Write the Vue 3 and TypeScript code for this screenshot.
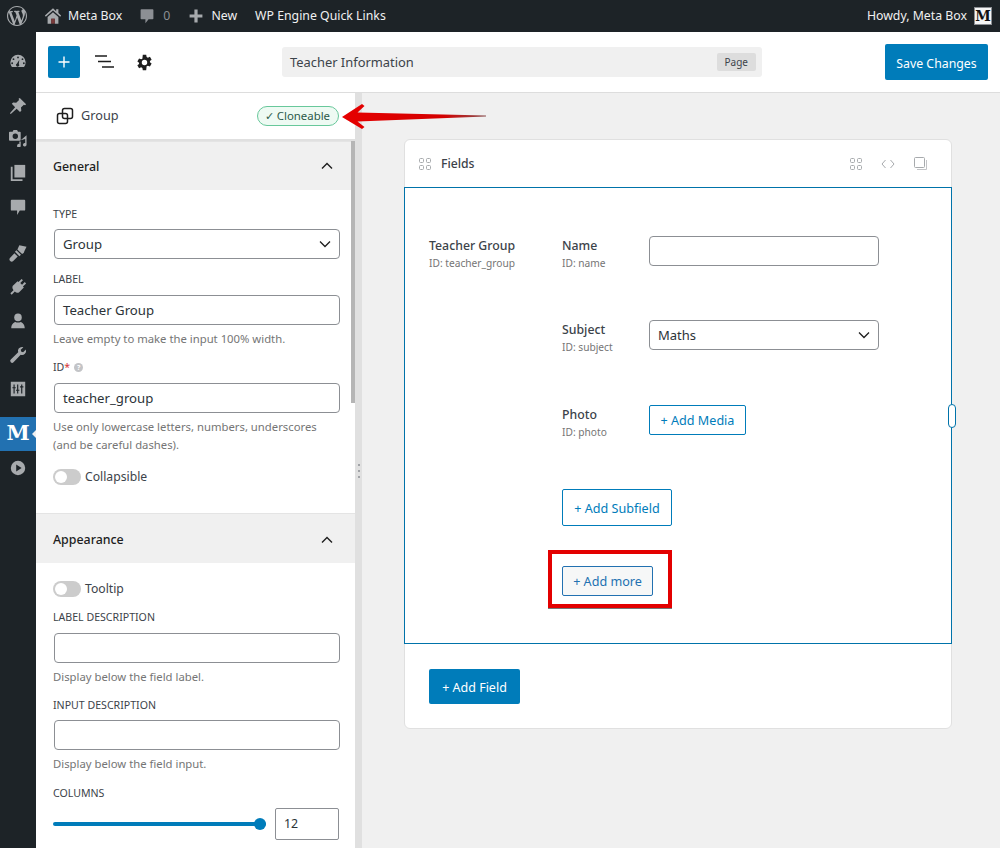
<script setup lang="ts">
const subfields = [
  { name: 'Name', id: 'ID: name', kind: 'k-text' },
  { name: 'Subject', id: 'ID: subject', kind: 'k-select' },
  { name: 'Photo', id: 'ID: photo', kind: 'k-media' },
]
</script>

<template>
  <div class="page">
    <header class="adminbar">
      <svg class="wp" viewBox="0 0 20 20" width="20" height="20"><path fill="#a7aaad" d="M20 10c0-5.510-4.490-10-10-10C4.480 0 0 4.490 0 10c0 5.520 4.480 10 10 10 5.510 0 10-4.480 10-10zM7.780 15.370L4.370 6.220c.55-.02 1.170-.08 1.170-.08.5-.06.44-1.130-.06-1.110 0 0-1.450.11-2.370.11-.18 0-.37 0-.58-.01C4.120 2.690 6.890 1.120 10 1.120c2.330 0 4.450.87 6.050 2.340-.68-.11-1.650.39-1.650 1.580 0 .74.45 1.360.9 2.100.35.61.55 1.360.55 2.460 0 1.490-1.400 5-1.400 5l-3.030-8.370c.54-.02.82-.17.82-.17.5-.05.44-1.250-.06-1.220 0 0-1.440.12-2.380.12-.87 0-2.330-.12-2.330-.12-.5-.03-.56 1.200-.06 1.220l.92.08 1.260 3.410zM17.410 10c.24-.64.74-1.870.43-4.250.7 1.290 1.050 2.710 1.050 4.250 0 3.290-1.730 6.240-4.400 7.780.97-2.590 1.940-5.200 2.920-7.780zM6.100 18.090C3.120 16.650 1.110 13.530 1.110 10c0-1.300.23-2.480.72-3.590C3.250 10.300 4.670 14.200 6.100 18.090zm4.030-6.630l2.580 6.980c-.86.29-1.740.45-2.710.45-.81 0-1.600-.12-2.340-.34.81-2.380 1.640-4.730 2.470-7.090z"/></svg>
      <svg class="home" viewBox="0 0 20 20" width="18" height="18"><path fill="#a7aaad" d="M10 1.500 1 9.500l1 1.200L10 3.800l8 6.900 1-1.200-3-2.700V2.500h-2.500v2.300z"/><path fill="#a7aaad" d="M4 11 10 5.800 16 11v7.500h-4V13H8v5.500H4z"/><rect x="8" y="13" width="4" height="5.500" fill="#7a3b3b"/></svg>
      <span class="bar-t site">Meta Box</span>
      <svg class="cmt" viewBox="0 0 20 20" width="16" height="16"><path fill="#8c8f94" d="M3 1.500h14a1 1 0 0 1 1 1v10.500a1 1 0 0 1-1 1h-5l-4 5v-5H3a1 1 0 0 1-1-1V2.500a1 1 0 0 1 1-1z"/></svg>
      <span class="bar-t zero">0</span>
      <svg class="plus" viewBox="0 0 20 20" width="16" height="16"><path fill="#a7aaad" d="M8 2h4v6h6v4h-6v6H8v-6H2V8h6z"/></svg>
      <span class="bar-t new">New</span>
      <span class="bar-t quick">WP Engine Quick Links</span>
      <span class="bar-t howdy">Howdy, Meta Box</span>
      <span class="avatar">M</span>
    </header>

    <div class="shell">
      <nav class="menu">
        <svg class="mi first" viewBox="0 0 20 20"><path d="M10 3a8.500 8.500 0 0 0-8.500 8.500c0 2 .7 3.800 1.800 5.200h13.400a8.500 8.500 0 0 0 1.800-5.200A8.500 8.500 0 0 0 10 3zm0 2a1 1 0 1 1 0 2 1 1 0 0 1 0-2zM5 7a1 1 0 1 1 0 2 1 1 0 0 1 0-2zm-1.500 4.500a1 1 0 1 1 0 2 1 1 0 0 1 0-2zm13 0a1 1 0 1 1 0 2 1 1 0 0 1 0-2zM15 7a1 1 0 1 1 0 2 1 1 0 0 1 0-2zm-3.500 1.500-.6 4.700a1.800 1.800 0 1 1-2-.4z" fill-rule="evenodd"/></svg>
        <svg class="mi g2" viewBox="0 0 20 20"><path d="M12 1l7 7-1.200 1.200-1.300-.6-3.200 3.200.4 3.400-1.500 1.500-3.700-3.700L2 19l-1-1 5.800-6.700L3.100 7.600l1.500-1.500 3.400.4 3.200-3.200-.6-1.300z"/></svg>
        <svg class="mi g3" viewBox="0 0 20 20"><path d="M1 3h3l1-2h4l1 2h2a1 1 0 0 1 1 1v8a1 1 0 0 1-1 1H1a1 1 0 0 1-1-1V4a1 1 0 0 1 1-1zm6 2a3 3 0 1 0 0 6 3 3 0 0 0 0-6z" fill-rule="evenodd"/><path d="M19.500 7v10.500a2 2 0 1 1-1.500-1.900V11l-5 1.500v6a2 2 0 1 1-1.500-1.900V14h1.500v-1.500z"/></svg>
        <svg class="mi g4" viewBox="0 0 20 20"><path d="M6 1h12v14H6z"/><path d="M4 3v14h11v2H2V3z"/></svg>
        <svg class="mi g5" viewBox="0 0 20 20"><path d="M3 2h14a1 1 0 0 1 1 1v10a1 1 0 0 1-1 1h-5l-3 5v-5H3a1 1 0 0 1-1-1V3a1 1 0 0 1 1-1z"/></svg>
        <svg class="mi g6" viewBox="0 0 20 20"><path d="M11.500 1.500 19.500 3l-2.200 4.500-1 2.500-1.800 1.200L9.300 6z"/><path d="M8.300 7 13.300 12 11.600 13.700 6.600 8.700z"/><path d="M6 10.300l3.700 3.700-5 4.800a2 2 0 0 1-3.400-3.400z"/></svg>
        <svg class="mi g7" viewBox="0 0 20 20"><path d="M14 1l1.500 1.500-3 3L14.500 7.500l3-3L19 6l-3.500 3.500 1 1-5.500 5.500A4 4 0 0 1 6.500 15L3 18.500 1.500 17 5 13.500A4 4 0 0 1 4 9l5.500-5.500 1 1z"/></svg>
        <svg class="mi g8" viewBox="0 0 20 20"><circle cx="10" cy="6" r="4.200"/><path d="M2.500 18c0-4 2.500-6.500 4.500-7 1.800 1 4.200 1 6 0 2 .5 4.500 3 4.500 7z"/></svg>
        <svg class="mi g9" viewBox="0 0 20 20"><path d="M14.500 1a4.500 4.500 0 0 1 1.500.3l-3 3 .7 2 2 .7 3-3A4.500 4.500 0 0 1 13 9.800L5 18a2 2 0 0 1-3-3l8.200-8A4.500 4.500 0 0 1 14.500 1z"/></svg>
        <svg class="mi g10" viewBox="0 0 20 20"><path fill-rule="evenodd" d="M2 2h16v16H2zM5 5v3H3.800v1.200H5V15h1.300V9.200h1.200V8H6.300V5zm4 0v5.800H7.800V12H9v3h1.300v-3h1.200v-1.200h-1.200V5zm4.500 0v2h-1.200v1.200h1.200V15h1.300V8.200H16V7h-1.200V5z"/></svg>
        <div class="mi-active">
          <span class="m-letter">M</span>
          <span class="notch"></span>
        </div>
        <svg class="mi g12" viewBox="0 0 20 20"><path fill-rule="evenodd" d="M10 2a8 8 0 1 1 0 16 8 8 0 0 1 0-16zM8 6v8l6-4z"/></svg>
      </nav>

      <div class="workspace">
        <div class="toolbar">
          <button class="add-btn">
            <svg viewBox="0 0 16 16" width="16" height="16"><path d="M8 2.500v11M2.500 8h11" stroke="#fff" stroke-width="1.400"/></svg>
          </button>
          <svg class="list-ic" viewBox="0 0 20 14" width="20" height="14"><path d="M0 1h12M3 6.500h13M7 12h12" stroke="#1e1e1e" stroke-width="1.500"/></svg>
          <svg class="gear" viewBox="0 0 20 20" width="17" height="17"><path fill="#1e1e1e" fill-rule="evenodd" d="M8 1h4l.5 2.500 1.500.8 2.400-1 2 3.400-2 1.600v1.400l2 1.600-2 3.400-2.400-1-1.500.8L12 19H8l-.5-2.500-1.500-.8-2.400 1-2-3.400 2-1.600V10.300l-2-1.600 2-3.400 2.400 1 1.500-.8zM10 6.800a3.200 3.200 0 1 0 0 6.400 3.200 3.200 0 0 0 0-6.400z"/></svg>
          <div class="title-box">
            <span>Teacher Information</span>
            <span class="page-tag">Page</span>
          </div>
          <button class="save">Save Changes</button>
        </div>

        <div class="body">
          <aside class="panel">
            <div class="group-head">
              <svg viewBox="0 0 18 18" width="18" height="18"><rect x="1.500" y="6.500" width="10" height="10" rx="2" fill="none" stroke="#1e1e1e" stroke-width="1.500"/><rect x="6.500" y="1.500" width="10" height="10" rx="2" fill="none" stroke="#1e1e1e" stroke-width="1.500"/></svg>
              <span class="group-t">Group</span>
              <span class="badge">✓ Cloneable</span>
            </div>
            <div class="scroll">
              <section class="sec-head"><span>General</span><svg viewBox="0 0 12 8" width="12" height="8"><path d="M1 6.500 6 1.500l5 5" fill="none" stroke="#1e1e1e" stroke-width="1.400"/></svg></section>
              <div class="sec-body general">
                <label class="lab">TYPE</label>
                <div class="inp sel">Group<svg viewBox="0 0 12 8" width="12" height="8"><path d="M1 1.500 6 6.500l5-5" fill="none" stroke="#1e1e1e" stroke-width="1.300"/></svg></div>
                <label class="lab mt">LABEL</label>
                <div class="inp">Teacher Group</div>
                <p class="hint">Leave empty to make the input 100% width.</p>
                <label class="lab idl">ID<em>*</em><i class="q">?</i></label>
                <div class="inp">teacher_group</div>
                <p class="hint">Use only lowercase letters, numbers, underscores<br>(and be careful dashes).</p>
                <div class="tog-row"><span class="tog"></span>Collapsible</div>
              </div>
              <section class="sec-head sec-b"><span>Appearance</span><svg viewBox="0 0 12 8" width="12" height="8"><path d="M1 6.500 6 1.500l5 5" fill="none" stroke="#1e1e1e" stroke-width="1.400"/></svg></section>
              <div class="sec-body appearance">
                <div class="tog-row"><span class="tog"></span>Tooltip</div>
                <label class="lab ld">LABEL DESCRIPTION</label>
                <div class="inp"></div>
                <p class="hint">Display below the field label.</p>
                <label class="lab id2">INPUT DESCRIPTION</label>
                <div class="inp"></div>
                <p class="hint">Display below the field input.</p>
                <label class="lab col">COLUMNS</label>
                <div class="slider-row">
                  <div class="track"><span class="thumb"></span></div>
                  <div class="num">12</div>
                </div>
              </div>
            </div>
            <span class="scrollbar"></span>
          </aside>

          <div class="gutter"><span class="dots"></span></div>

          <main class="canvas">
            <div class="card">
              <div class="card-head">
                <svg class="grid4" viewBox="0 0 12 12" width="12" height="12"><g fill="none" stroke="#a7aaad" stroke-width="1"><rect x=".5" y=".5" width="4" height="4" rx="1"/><rect x="7.500" y=".5" width="4" height="4" rx="1"/><rect x=".5" y="7.500" width="4" height="4" rx="1"/><rect x="7.500" y="7.500" width="4" height="4" rx="1"/></g></svg>
                <span class="fields-t">Fields</span>
                <svg class="grid4 r1" viewBox="0 0 12 12" width="12" height="12"><g fill="none" stroke="#a7aaad" stroke-width="1"><rect x=".5" y=".5" width="4" height="4" rx="1"/><rect x="7.500" y=".5" width="4" height="4" rx="1"/><rect x=".5" y="7.500" width="4" height="4" rx="1"/><rect x="7.500" y="7.500" width="4" height="4" rx="1"/></g></svg>
                <svg class="r2" viewBox="0 0 14 10" width="14" height="10"><path d="M4.500 1 1 5l3.500 4M9.500 1 13 5l-3.500 4" fill="none" stroke="#a7aaad" stroke-width="1"/></svg>
                <svg class="r3" viewBox="0 0 13 13" width="13" height="13"><rect x=".5" y=".5" width="10" height="10" rx="1" fill="none" stroke="#a7aaad"/><path d="M12.500 3v9.500H3" fill="none" stroke="#c3c4c7"/></svg>
              </div>
              <div class="group-box">
                <div class="gcol">
                  <div class="fname">Teacher Group</div>
                  <div class="fid">ID: teacher_group</div>
                </div>
                <div class="subs">
                  <div v-for="f in subfields" :key="f.name" class="sub" :class="f.kind">
                    <div class="sub-l">
                      <div class="fname">{{ f.name }}</div>
                      <div class="fid">{{ f.id }}</div>
                    </div>
                    <div v-if="f.kind === 'k-text'" class="ctl"></div>
                    <div v-else-if="f.kind === 'k-select'" class="ctl csel">Maths<svg viewBox="0 0 12 8" width="12" height="8"><path d="M1 1.500 6 6.500l5-5" fill="none" stroke="#1e1e1e" stroke-width="1.300"/></svg></div>
                    <button v-else class="outline media">+ Add Media</button>
                  </div>
                  <button class="outline subfield">+ Add Subfield</button>
                  <button class="outline more">+ Add more</button>
                </div>
                <span class="handle"></span>
              </div>
              <div class="card-foot"><button class="addfield">+ Add Field</button></div>
            </div>
          </main>
        </div>
      </div>
    </div>

    <svg class="arrow" viewBox="0 0 150 32" width="150" height="32"><defs><linearGradient id="ag" x1="0" x2="1"><stop offset="0" stop-color="#e60000"/><stop offset=".7" stop-color="#d40000"/><stop offset="1" stop-color="#8a5050"/></linearGradient></defs><path fill="url(#ag)" d="M2 17 22 4l2.500 2-7 6.500L146 15.500v1L17.500 21.500l7 5.500L22 29z"/></svg>
    <span class="redbox"></span>
  </div>
</template>

<style>
html, body { margin: 0; background: #f0f0f0; }
</style>

<style scoped>
.page { position: relative; width: 1000px; height: 848px; overflow: hidden; font-family: "Noto Sans", sans-serif; font-size: 12.4px; color: #3c434a; background: #f0f0f0; }
.adminbar { height: 32px; background: #1d2327; display: flex; align-items: center; color: #f0f0f1; }
.wp { margin-left: 7px; flex: none; }
.bar-t { font-size: 12.300px; line-height: 32px; white-space: nowrap; }
.home { margin-left: 17px; flex: none; }
.site { margin-left: 6px; }
.cmt { margin-left: 17px; flex: none; }
.zero { margin-left: 8px; color: #8c8f94; }
.plus { margin-left: 18px; flex: none; }
.new { margin-left: 7px; }
.quick { margin-left: 18px; }
.howdy { margin-left: auto; }
.avatar { width: 16px; height: 16px; margin: 0 8px 0 7px; border: 1px solid #8c8f94; background: #f5f5f5; color: #111; font: 700 14px/16px "DejaVu Serif", serif; text-align: center; overflow: hidden; }

.shell { display: flex; height: 816px; }
.menu { width: 36px; flex: none; background: #1d2327; display: flex; flex-direction: column; align-items: center; }
.mi { width: 18px; height: 18px; fill: #a7aaad; flex: none; }
.first { margin-top: 20px; }
.g2 { margin-top: 27px; }
.g3 { margin-top: 14px; }
.g4 { margin-top: 17px; }
.g5 { margin-top: 16px; }
.g6 { margin-top: 28px; }
.g7 { margin-top: 16px; }
.g8 { margin-top: 16px; }
.g9 { margin-top: 16px; }
.g10 { margin-top: 16px; }
.g12 { margin-top: 8px; }
.mi-active { position: relative; width: 36px; height: 34px; margin-top: 19px; background: #2271b1; text-align: center; flex: none; }
.m-letter { color: #fff; font: 700 21px/32px "DejaVu Serif", "Liberation Serif", serif; }
.notch { position: absolute; right: 0; top: 13px; border: 4px solid transparent; border-right-color: #f0f0f0; border-left-width: 0; }

.workspace { flex: 1; min-width: 0; display: flex; flex-direction: column; }
.toolbar { height: 60px; flex: none; background: #fff; border-bottom: 1px solid #ddd; display: flex; align-items: center; }
.add-btn { width: 32px; height: 32px; margin-left: 12px; padding: 0; border: 0; border-radius: 2px; background: #007cba; display: flex; align-items: center; justify-content: center; }
.list-ic { margin-left: 15px; }
.gear { margin-left: 21px; }
.title-box { margin-left: 129px; width: 480px; height: 30px; padding: 0 6px 0 8px; box-sizing: border-box; border-radius: 3px; background: #f0f0f0; display: flex; align-items: center; justify-content: space-between; font-size: 12.900px; color: #3c434a; }
.page-tag { height: 18px; padding: 0 8px; font-size: 10px; line-height: 18px; border-radius: 2px; background: #ddd; }
.save { margin-left: 123px; width: 103px; height: 36px; padding: 2px 0 0; border: 0; border-radius: 2px; background: #007cba; color: #fff; font: 12.300px "Noto Sans", sans-serif; }

.body { flex: 1; min-height: 0; display: flex; }
.panel { position: relative; width: 319px; flex: none; background: #fff; display: flex; flex-direction: column; overflow: hidden; }
.group-head { height: 46px; flex: none; padding: 0 16px 0 20px; display: flex; align-items: center; border-bottom: 2px solid #e0e0e0; box-sizing: content-box; }
.group-t { margin-left: 7px; font-size: 12.700px; position: relative; top: -1px; }
.badge { margin-left: auto; height: 18px; padding: 0 8px 0 7px; border: 1px solid #68c89b; border-radius: 10px; background: #eefaf3; font-size: 11.400px; line-height: 18px; color: #2c5a4a; }
.scroll { flex: 1; min-height: 0; }
.sec-head { height: 49px; box-sizing: border-box; padding: 0 22px 0 17px; background: #f0f0f0; display: flex; align-items: center; justify-content: space-between; font-size: 12.400px; font-weight: 500; color: #1e1e1e; border-top: 1px solid #e4e4e4; }
.sec-b { height: 50px; padding-top: 2px; }
.sec-body { padding: 0 15px 0 17px; }
.general { height: 323px; padding-top: 17px; box-sizing: border-box; }
.appearance { padding-top: 17px; }
.lab { display: block; font-size: 10.600px; line-height: 14px; color: #3c434a; }
.mt { margin-top: 13px; }
.inp { width: 286px; height: 30px; margin: 9px 0 0 1px; padding: 0 8px; box-sizing: border-box; border: 1px solid #8c8f94; border-radius: 4px; background: #fff; font-size: 13.200px; line-height: 28px; color: #2c3338; display: flex; align-items: center; justify-content: space-between; }
.sel { margin-top: 8px; }
.hint { margin: 5px 0 0; font-size: 11.300px; line-height: 18px; color: #757575; }
.idl { margin-top: 12px; display: flex; align-items: center; }
.idl em { color: #d63638; font-style: normal; }
.q { width: 9px; height: 9px; margin-left: 4px; border-radius: 50%; background: #c3c4c7; color: #fff; font: 700 7px/9px "Noto Sans", sans-serif; text-align: center; }
.tog-row { display: flex; align-items: center; margin-top: 14px; font-size: 12.200px; line-height: 18px; }
.appearance > .tog-row { margin-top: 0; }
.tog { position: relative; width: 28px; height: 16px; margin-right: 4px; border-radius: 8px; background: #ccc; }
.tog::after { content: ""; position: absolute; left: 2px; top: 2px; width: 12px; height: 12px; border-radius: 50%; background: #fff; }
.ld { margin-top: 12px; }
.id2 { margin-top: 12px; }
.id2 + .inp { margin-top: 8px; }
.col { margin-top: 13px; }
.slider-row { display: flex; align-items: center; margin-top: 8px; }
.track { position: relative; width: 213px; height: 4px; border-radius: 2px; background: #007cba; }
.thumb { position: absolute; right: 0; top: -4px; width: 12px; height: 12px; border-radius: 50%; background: #007cba; }
.num { margin-left: 9px; width: 64px; height: 32px; box-sizing: border-box; padding-left: 8px; border: 1px solid #8c8f94; border-radius: 2px; font-size: 12.400px; line-height: 30px; color: #2c3338; }
.scrollbar { position: absolute; right: 0; top: 48px; width: 4px; height: 262px; background: #b5b5b5; }

.gutter { width: 7px; flex: none; background: #e0e0e0; position: relative; }
.dots { position: absolute; left: 3px; top: 371px; width: 2px; height: 2px; border-radius: 50%; background: #8c8f94; box-shadow: 0 6px 0 #8c8f94, 0 12px 0 #8c8f94; }

.canvas { flex: 1; min-width: 0; padding: 46px 0 0 42px; box-sizing: border-box; }
.card { width: 548px; border: 1px solid #e0e0e0; border-radius: 6px; box-sizing: border-box; background: #fff; }
.card-head { height: 47px; padding: 0 24px 0 14px; display: flex; align-items: center; }
.fields-t { margin-left: 10px; font-size: 12.200px; font-weight: 500; color: #3c434a; }
.r1 { margin-left: auto; }
.r2 { margin-left: 19px; }
.r3 { margin-left: 19px; }
.group-box { position: relative; margin: 0 -1px; height: 457px; box-sizing: border-box; padding: 48px 0 0 24px; border: 1px solid #0073aa; display: flex; }
.gcol { width: 133px; flex: none; }
.fname { font-size: 12.300px; line-height: 20px; font-weight: 500; color: #3c434a; }
.fid { font-size: 10.200px; line-height: 15px; color: #757575; }
.subs { display: flex; flex-direction: column; align-items: flex-start; }
.sub { display: flex; width: 320px; }
.sub-l { width: 87px; flex: none; }
.k-text { height: 84px; }
.k-select { height: 85px; }
.k-media { height: 84px; }
.ctl { width: 230px; height: 30px; box-sizing: border-box; padding: 0 8px; border: 1px solid #8c8f94; border-radius: 4px; font-size: 13px; color: #2c3338; display: flex; align-items: center; justify-content: space-between; }
.outline { margin: 0; padding: 0; border: 1px solid #007cba; border-radius: 2px; background: #fff; color: #007cba; font: 12.600px "Noto Sans", sans-serif; }
.media { width: 97px; height: 30px; }
.subfield { width: 110px; height: 37px; padding-top: 1px; }
.more { width: 91px; height: 30px; margin-top: 40px; border-color: #2271b1; color: #2271b1; background: #f6f7f7; }
.handle { position: absolute; right: -5px; top: 216px; width: 6px; height: 22px; border: 1px solid #0073aa; border-radius: 4px; background: #fff; }
.card-foot { padding: 25px 0 24px 24px; }
.addfield { display: block; width: 91px; height: 35px; padding: 1px 0 0; border: 0; border-radius: 2px; background: #007cba; color: #fff; font: 12.500px "Noto Sans", sans-serif; }

.arrow { position: absolute; left: 340px; top: 100px; }
.redbox { position: absolute; left: 548px; top: 550px; width: 116px; height: 50px; border: 4px solid #e30000; box-shadow: 0 1px 0 #777; }
</style>
